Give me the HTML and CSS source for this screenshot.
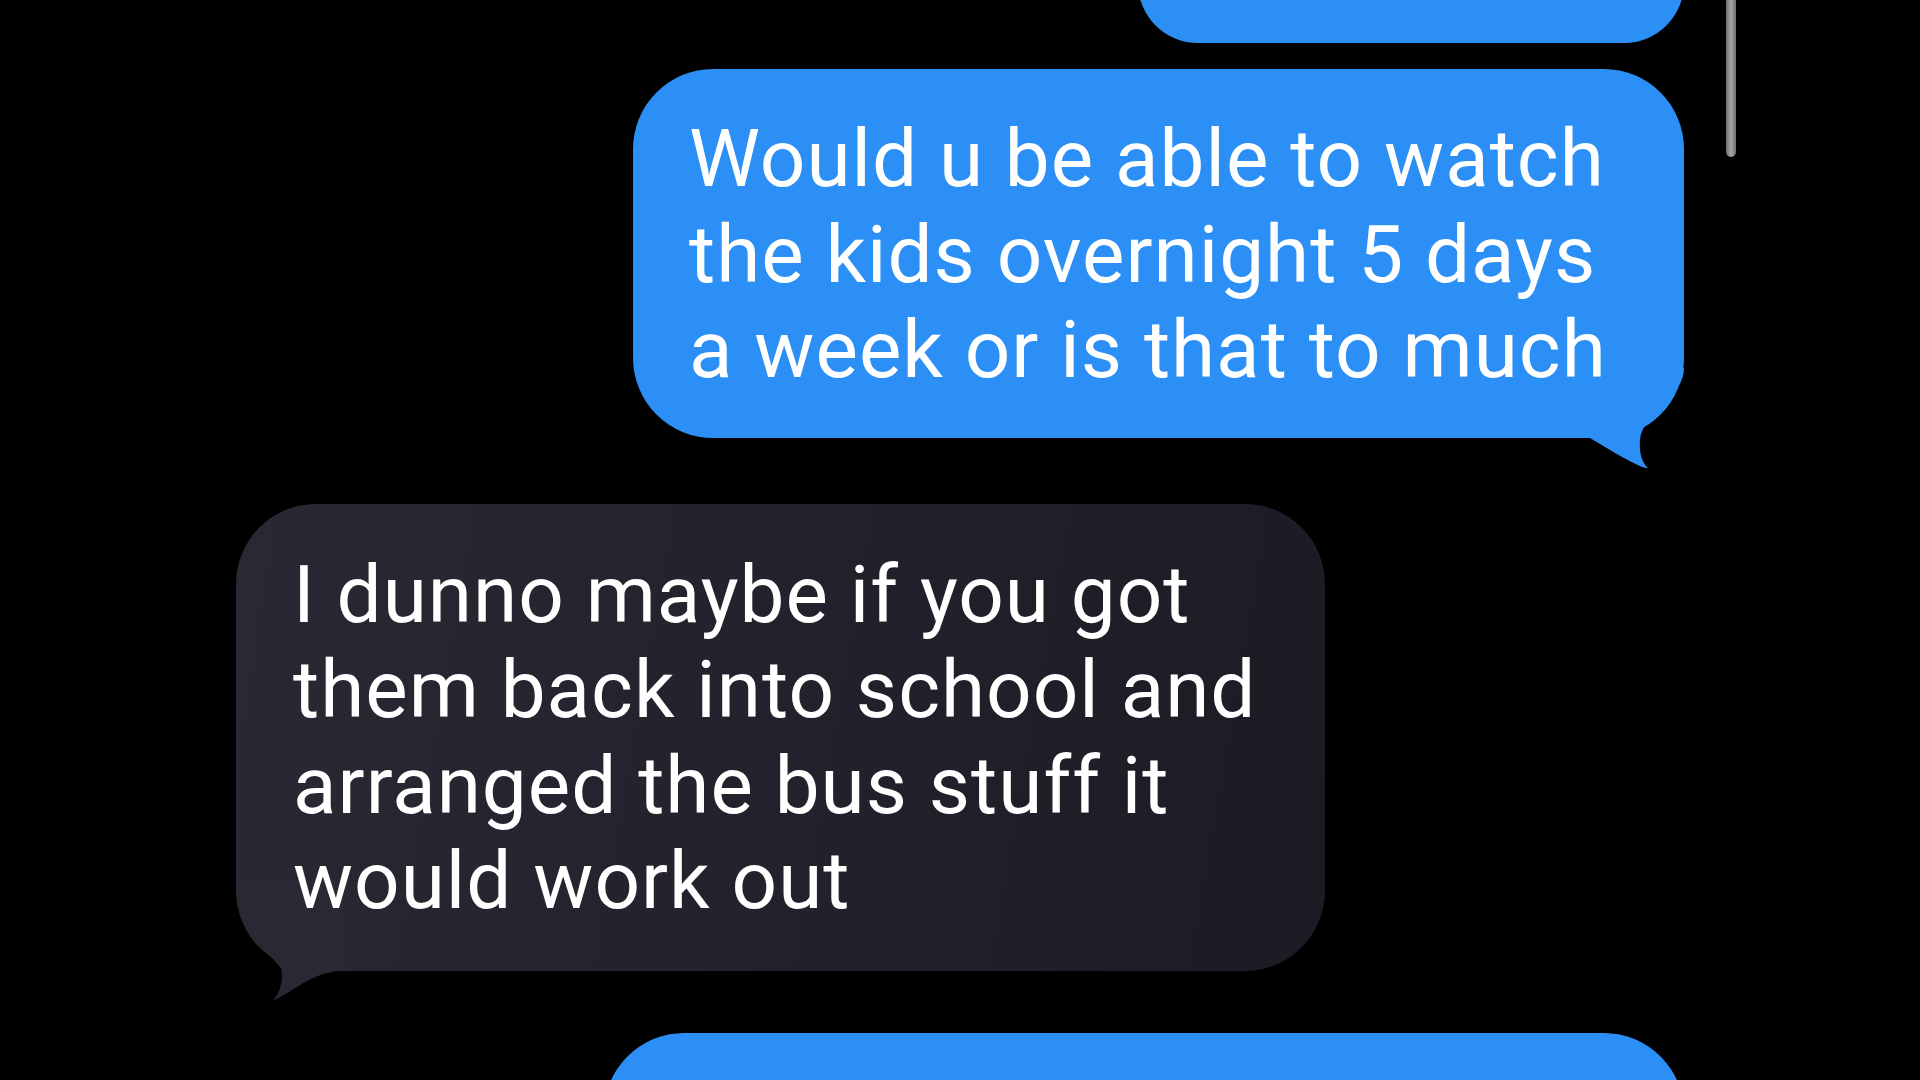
FILE: index.html
```html
<!DOCTYPE html>
<html lang="en">

<head>
	<meta charset="UTF-8">
	<meta name="viewport" content="width=device-width, initial-scale=1.0">
	<title>Messages</title>
	<link rel="stylesheet" href="styles.css">
</head>

<body>
	<div class="thread">
		<!-- mensagem anterior, cortada no topo -->
		<div class="bubble sent cut"></div>

		<div class="bubble sent main">
			Would u be able to watch<br>
			the kids overnight 5 days<br>
			a week or is that to much
			<svg class="tail tail-sent" width="104" height="105" viewBox="0 0 104 105">
				<path d="M104 0 C104 30, 62 45, 60 72 C59 85, 62 95, 68 100 C62 101, 40 88, 10 70 L0 70 L0 0 Z" />
			</svg>
		</div>

		<div class="bubble received">
			I dunno maybe if you got<br>
			them back into school and<br>
			arranged the bus stuff it<br>
			would work out
			<svg class="tail tail-received" width="114" height="125" viewBox="0 0 114 125">
				<path d="M0 0 C2 45, 30 70, 45 88 C48 98, 44 114, 37 120 C48 118, 70 96, 100 91 L114 91 L114 0 Z" />
			</svg>
		</div>

		<div class="bubble sent next"></div>
	</div>

	<div class="scrollbar"></div>
</body>

</html>
```

FILE: styles.css
```css
body,
html {
	margin: 0;
	padding: 0;
	background: #000;
	width: 1920px;
	height: 1080px;
	overflow: hidden;
	font-family: 'Roboto', 'Inter', sans-serif;
}

.thread {
	display: flex;
	flex-direction: column;
	padding: 0 236px;
	box-sizing: border-box;
	width: 1920px;
	height: 1080px;
	overflow: hidden;
}

.bubble {
	position: relative;
	z-index: 0;
	flex-shrink: 0;
	box-sizing: border-box;
	border-radius: 80px;
	color: #fff;
	font-size: 80px;
	line-height: 95.5px;
	letter-spacing: 1px;
}

.sent {
	align-self: flex-end;
	background: #2b8ff5;
}

.received {
	align-self: flex-start;
	background: linear-gradient(100deg, #292934 0%, #22222c 50%, #1b1b24 100%);
}

/* bolha de cima, só aparece a parte de baixo */
.cut {
	width: 546px;
	height: 120px;
	margin-top: -77px;
}

.main {
	width: 1051px;
	margin-top: 26px;
	padding: 43px 0 39px 56px;
}

.received {
	width: 1089px;
	margin-top: 66px;
	padding: 44px 0 41px 57px;
}

.next {
	width: 1080px;
	height: 200px;
	margin-top: 62px;
}

/* rabinho da bolha fica atrás do texto */
.tail {
	position: absolute;
	z-index: -1;
	display: block;
}

.tail-sent {
	right: 0;
	bottom: -35px;
	fill: #2b8ff5;
}

.tail-received {
	left: 0;
	bottom: -34px;
	fill: #292934;
}

.scrollbar {
	position: absolute;
	top: -10px;
	left: 1726px;
	width: 10px;
	height: 167px;
	border-radius: 5px;
	background: linear-gradient(90deg, #6e6e6e, #a8a8a8 50%, #6e6e6e);
}
```
